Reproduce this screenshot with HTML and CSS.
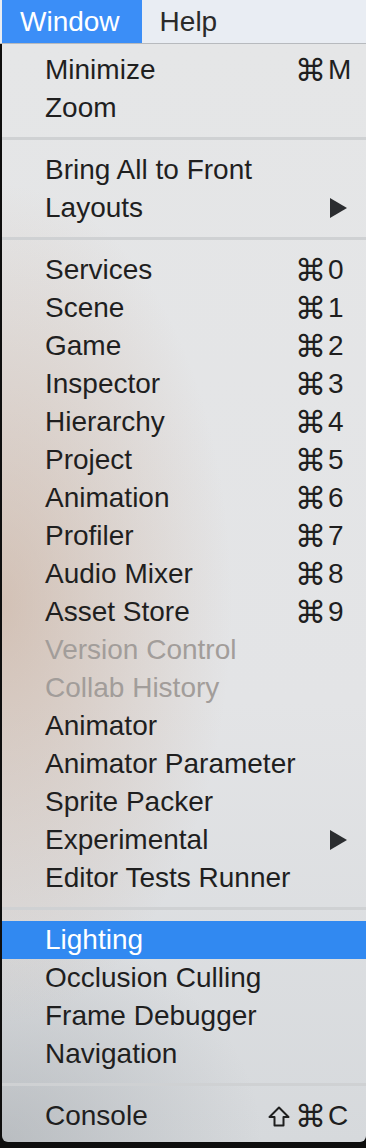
FILE: index.html
```html
<!DOCTYPE html>
<html lang="en">
<head>
  <meta charset="UTF-8">
  <meta name="viewport" content="width=device-width, initial-scale=1.0">
  <title>Window Menu</title>
  <link rel="stylesheet" href="styles.css">
</head>
<body>
  <!-- Menu Bar -->
  <div class="menubar">
    <div class="menubar-title active">Window</div>
    <div class="menubar-title">Help</div>
  </div>

  <!-- Window Menu -->
  <div class="menu">
    <div class="item"><span class="label">Minimize</span><span class="mods">&#8984;</span><span class="key">M</span></div>
    <div class="item"><span class="label">Zoom</span></div>
    <div class="separator"></div>

    <div class="item"><span class="label">Bring All to Front</span></div>
    <div class="item"><span class="label">Layouts</span><span class="key"><span class="arrow"></span></span></div>
    <div class="separator"></div>

    <div class="item"><span class="label">Services</span><span class="mods">&#8984;</span><span class="key">0</span></div>
    <div class="item"><span class="label">Scene</span><span class="mods">&#8984;</span><span class="key">1</span></div>
    <div class="item"><span class="label">Game</span><span class="mods">&#8984;</span><span class="key">2</span></div>
    <div class="item"><span class="label">Inspector</span><span class="mods">&#8984;</span><span class="key">3</span></div>
    <div class="item"><span class="label">Hierarchy</span><span class="mods">&#8984;</span><span class="key">4</span></div>
    <div class="item"><span class="label">Project</span><span class="mods">&#8984;</span><span class="key">5</span></div>
    <div class="item"><span class="label">Animation</span><span class="mods">&#8984;</span><span class="key">6</span></div>
    <div class="item"><span class="label">Profiler</span><span class="mods">&#8984;</span><span class="key">7</span></div>
    <div class="item"><span class="label">Audio Mixer</span><span class="mods">&#8984;</span><span class="key">8</span></div>
    <div class="item"><span class="label">Asset Store</span><span class="mods">&#8984;</span><span class="key">9</span></div>
    <div class="item disabled"><span class="label">Version Control</span></div>
    <div class="item disabled"><span class="label">Collab History</span></div>
    <div class="item"><span class="label">Animator</span></div>
    <div class="item"><span class="label">Animator Parameter</span></div>
    <div class="item"><span class="label">Sprite Packer</span></div>
    <div class="item"><span class="label">Experimental</span><span class="key"><span class="arrow"></span></span></div>
    <div class="item"><span class="label">Editor Tests Runner</span></div>
    <div class="separator"></div>

    <div class="item selected"><span class="label">Lighting</span></div>
    <div class="item"><span class="label">Occlusion Culling</span></div>
    <div class="item"><span class="label">Frame Debugger</span></div>
    <div class="item"><span class="label">Navigation</span></div>
    <div class="separator"></div>

    <div class="item">
      <span class="label">Console</span>
      <span class="mods">
        <svg class="shift" width="22" height="21" viewBox="0 0 22 21"><path d="M11 1.5 L20.5 11 H15.5 V19.5 H6.5 V11 H1.5 Z" fill="none" stroke="#1f1f1f" stroke-width="2" stroke-linejoin="round"/></svg>&#8984;
      </span>
      <span class="key">C</span>
    </div>
  </div>
</body>
</html>
```

FILE: styles.css
```css
/* Global Styles */
body {
  margin: 0;
  inline-size: 366px;
  block-size: 1148px;
  overflow: hidden;
  background: #0e0e0e;
  font-family: "Liberation Sans", Arial, sans-serif;
  font-size: 28px;
  color: #1f1f1f;
}

/* Menu Bar */
.menubar {
  display: flex;
  block-size: 43px;
  background: #e9edf3;
  border-block-end: 1px solid #b7babe;
  padding-inline-start: 2px;
}

.menubar-title {
  display: flex;
  align-items: center;
  padding: 0 19px 0 18px;
  color: #2a2a2a;
}

.menubar-title.active {
  padding-inline-end: 22px;
  background: #3b8ef7;
  color: white;
}

/* Menu Panel */
.menu {
  margin-inline-start: 2px;
  padding: 7px 0;
  border-radius: 0 0 6px 6px;
  background:
    radial-gradient(ellipse 230px 420px at 0 560px, rgba(190, 150, 122, 0.45), rgba(190, 150, 122, 0) 100%),
    radial-gradient(ellipse 260px 220px at 0 1100px, rgba(150, 155, 160, 0.45), rgba(150, 155, 160, 0) 100%),
    linear-gradient(to bottom, #e5e6e7 0%, #e3e4e6 60%, #d6d9dc 100%);
}

.item {
  display: grid;
  grid-template-columns: 1fr auto 38px;
  align-items: center;
  block-size: 38px;
  padding-inline-start: 43px;
}

.mods {
  display: flex;
  align-items: center;
  justify-content: flex-end;
  gap: 5px;
  font-family: "DejaVu Sans", sans-serif;
  font-size: 31px;
  line-height: 1;
  padding-inline-end: 2px;
}

.key {
  grid-column: 3;
  display: flex;
  align-items: center;
}

.arrow {
  inline-size: 0;
  block-size: 0;
  margin-inline-start: 2px;
  border-block: 10px solid transparent;
  border-inline-start: 17px solid #2b2d30;
}

.disabled {
  color: #a29d9a;
}

.selected {
  background: #3189f1;
  color: white;
}

.separator {
  block-size: 3px;
  margin: 10px 0 11px;
  background: #cfd1d3;
}
```
